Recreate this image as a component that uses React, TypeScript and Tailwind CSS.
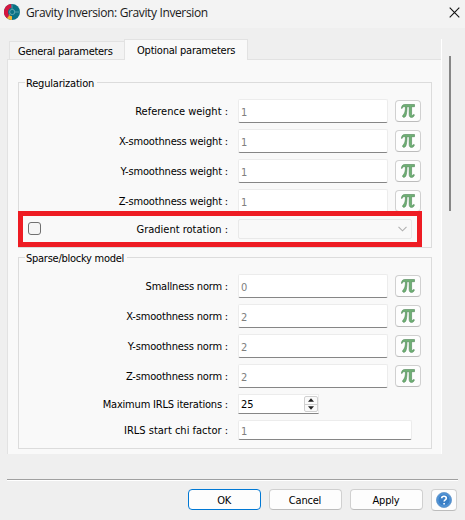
import React from "react";

function AppIcon() {
  return (
    <svg width="16" height="16" viewBox="0 0 16 16" className="shrink-0">
      <circle cx="8" cy="8" r="8" fill="#0b7285" />
      <path d="M8 8 L7.2 0 A8 8 0 0 0 3.2 14.4 Z" fill="#d4173f" />
      <path d="M8 8 L3 14.2 A8 8 0 0 0 8 16 Z" fill="#f7b52c" />
      <circle cx="8.3" cy="8" r="4.3" fill="#0b7285" />
      <circle cx="8.2" cy="8" r="2.6" fill="none" stroke="#5fa7b1" strokeWidth="1" />
      <path d="M8 0.5V5.4M10.8 8H15.5M4.8 11.2L6.4 9.6" stroke="#5fa7b1" strokeWidth="0.8" />
    </svg>
  );
}

function PiButton() {
  return (
    <div className="ml-[7px] mt-px flex h-[22px] w-[26px] shrink-0 items-start justify-center rounded-[4px] border border-[#d0d0d0] border-b-[#bcbcbc] bg-[#fdfdfd] pt-[3px]">
      <svg width="14" height="14" viewBox="0 0 14 14">
        <path
          d="M0.4 4.3 C0.8 1.5 1.8 0.5 3.8 0.5 H13.5 V2.7 H10.6 V10 C10.6 11.7 11.3 12 12.5 10.5 L13.4 10.8 C12.9 12.7 12 13.4 10.6 13.4 C8.9 13.4 8.2 12.4 8.2 10.4 V2.7 H6 C5.9 7.6 5.5 10.5 4.7 12.2 C4 13.5 2.3 13.7 1.7 12.7 C1.3 11.8 2 11 2.8 10.2 C4 8.7 4.4 6.2 4.5 2.7 H3.6 C2 2.7 1.5 3.1 1.1 4.4 Z"
          fill="#6fb074"
          stroke="#4f8758"
          strokeWidth="0.6"
        />
      </svg>
    </div>
  );
}

function Label({ text, track }: { text: string; track: string }) {
  return (
    <div className={"flex-1 whitespace-pre pr-[10px] pt-[2px] text-right text-black " + track}>{text}</div>
  );
}

function ValueRow({ label, track, value }: { label: string; track: string; value: string }) {
  return (
    <div className="flex h-[30px] items-start pr-[10px]">
      <div className="flex h-[24px] flex-1 items-center">
        <Label text={label} track={track} />
      </div>
      <div className="flex h-[24px] w-[150px] items-center rounded-[2px] border border-[#ececec] border-b-[#868686] bg-white pl-[2px] pt-[3px] text-[#808080]">
        {value}
      </div>
      <PiButton />
    </div>
  );
}

function Group({ title, track, className, children }: { title: string; track: string; className: string; children: React.ReactNode }) {
  return (
    <div className={"relative ml-[10px] w-[414px] border border-[#dcdcdc] " + className}>
      <div className={"absolute -top-[7px] left-[6px] h-4 whitespace-pre bg-[#f9f9f9] pl-px pr-[3px] leading-4 " + track}>{title}</div>
      {children}
    </div>
  );
}

function DialogButton({ text, className }: { text: string; className: string }) {
  return (
    <div className={"flex h-[21px] w-[73px] items-center justify-center rounded-[4px] border bg-[#fdfdfd] pr-px pt-[2px] " + className}>
      {text}
    </div>
  );
}

export default function App() {
  return (
    <div className="flex h-[520px] w-[465px] flex-col overflow-hidden bg-[#efefef] font-['DejaVu_Sans_Condensed','DejaVu_Sans',sans-serif] text-[11px] leading-[14px] text-black [font-stretch:condensed]">
      <div className="flex h-[28px] shrink-0 items-start bg-[#f3f3f3] pl-1 pt-1">
        <AppIcon />
        <div className="ml-[6px] whitespace-nowrap font-['Open_Sans','Noto_Sans',sans-serif] text-[12px] leading-[17px] tracking-[-0.37px] text-[#1a1a1a] [font-stretch:normal]">
          Gravity Inversion: Gravity Inversion
        </div>
        <svg width="11" height="11" viewBox="0 0 11 11" className="ml-auto mr-[5px] mt-[3px]">
          <path d="M0.7 0.7L10.3 10.3M10.3 0.7L0.7 10.3" stroke="#111" strokeWidth="1.1" />
        </svg>
      </div>

      <div className="flex h-[426px] shrink-0 pl-[7px] pt-[11px]">
        <div className="flex w-[435px] flex-col border-r border-white">
          <div className="flex h-[20px] items-end pl-[2px]">
            <div className="flex h-[18px] w-[116px] items-center border border-b-0 border-[#e2e2e2] bg-[#f3f3f3] pl-2 pt-[2px] tracking-[-0.28px] whitespace-nowrap">
              General parameters
            </div>
            <div className="relative z-10 -mb-px -ml-px flex h-[21px] w-[124px] items-center border border-b-0 border-[#e2e2e2] bg-[#f9f9f9] pl-3 pt-px tracking-[-0.22px] whitespace-nowrap">
              Optional parameters
            </div>
          </div>
          <div className="flex h-[395px] flex-col border-l border-t border-[#e2e2e2] bg-[#f9f9f9] pt-[22px]">
            <Group title="Regularization" track="tracking-[-0.2px]" className="h-[166px] pt-4">
              <ValueRow label="Reference weight :" track="" value="1" />
              <ValueRow label="X-smoothness weight :" track="tracking-[-0.17px]" value="1" />
              <ValueRow label="Y-smoothness weight :" track="tracking-[-0.17px]" value="1" />
              <ValueRow label="Z-smoothness weight :" track="tracking-[-0.17px]" value="1" />
              <div className="relative -ml-px -mt-2 flex h-[36px] w-[404px] items-center border-[5px] border-[#ee1c23] bg-[#f9f9f9]">
                <div className="mb-px ml-[5px] h-[13px] w-[13px] rounded-[3px] border border-[#707070] bg-[#f5f5f5]" />
                <Label text="Gradient rotation :" track="" />
                <div className="mr-[5px] flex h-[20px] w-[174px] items-center justify-end rounded-[2px] border border-[#e9e9e9] pr-[4px]">
                  <svg width="9" height="6" viewBox="0 0 9 6">
                    <path d="M0.5 0.8L4.5 4.8L8.5 0.8" fill="none" stroke="#b0b0b0" strokeWidth="1.1" />
                  </svg>
                </div>
              </div>
            </Group>

            <Group title="Sparse/blocky model" track="tracking-[-0.26px]" className="mt-[9px] h-[192px] pt-4">
              <ValueRow label="Smallness norm :" track="tracking-[-0.2px]" value="0" />
              <ValueRow label="X-smoothness norm :" track="tracking-[-0.17px]" value="2" />
              <ValueRow label="Y-smoothness norm :" track="tracking-[-0.17px]" value="2" />
              <ValueRow label="Z-smoothness norm :" track="tracking-[-0.17px]" value="2" />
              <div className="flex h-[20px] items-center pr-[112px]">
                <Label text="Maximum IRLS iterations :" track="tracking-[-0.19px]" />
                <div className="flex h-[20px] w-[81px] items-center border border-[#ececec] border-b-[#868686] bg-white pl-[2px]">
                  <span className="flex-1 pt-[2px]">25</span>
                  <div className="flex h-[16px] w-[14px] flex-col rounded-[2px] border border-[#d0d0d0] bg-[#fafafa]">
                    <div className="flex flex-1 items-center justify-center border-b border-[#d0d0d0]">
                      <svg width="6" height="4" viewBox="0 0 6 4"><path d="M0 3.7L3 0.2L6 3.7Z" fill="#222" /></svg>
                    </div>
                    <div className="flex flex-1 items-center justify-center">
                      <svg width="6" height="4" viewBox="0 0 6 4"><path d="M0 0.3L3 3.8L6 0.3Z" fill="#222" /></svg>
                    </div>
                  </div>
                </div>
              </div>
              <div className="mt-[6px] flex h-[20px] items-center pr-[19px]">
                <Label text="IRLS start chi factor :" track="" />
                <div className="flex h-[20px] w-[174px] items-center rounded-[2px] border border-[#ececec] border-b-[#868686] bg-white pl-[2px] pt-[3px] text-[#808080]">1</div>
              </div>
            </Group>
          </div>
        </div>
        <div className="ml-[7px] mt-[17px] h-[155px] w-[2px] bg-[#868686]" />
      </div>

      <div className="ml-[7px] mt-[25px] h-[2px] w-[451px] shrink-0 border-b border-white bg-[#a0a0a0]" />
      <div className="mt-2 flex pl-[188px]">
        <DialogButton text="OK" className="border-[#0078d4] tracking-[-0.3px]" />
        <DialogButton text="Cancel" className="ml-2 border-[#d0d0d0] border-b-[#bcbcbc] tracking-[-0.2px]" />
        <DialogButton text="Apply" className="ml-2 border-[#d0d0d0] border-b-[#bcbcbc] tracking-[-0.2px]" />
        <div className="ml-2 flex h-[22px] w-[26px] items-center justify-center rounded-[4px] border border-[#d0d0d0] border-b-[#bcbcbc] bg-[#fdfdfd]">
          <svg width="16" height="16" viewBox="0 0 16 16">
            <circle cx="8" cy="8" r="7.5" fill="#3a7fc6" stroke="#6f9fd0" strokeWidth="1" />
            <circle cx="8" cy="8" r="6.2" fill="none" stroke="#64a4e2" strokeWidth="0.8" />
            <path d="M5.7 6.3C5.7 3.5 10.3 3.6 10.3 6.2C10.3 7.8 8.1 7.8 8.1 9.5M8.1 10.9V12.5" fill="none" stroke="#fff" strokeWidth="1.6" />
          </svg>
        </div>
      </div>
    </div>
  );
}
